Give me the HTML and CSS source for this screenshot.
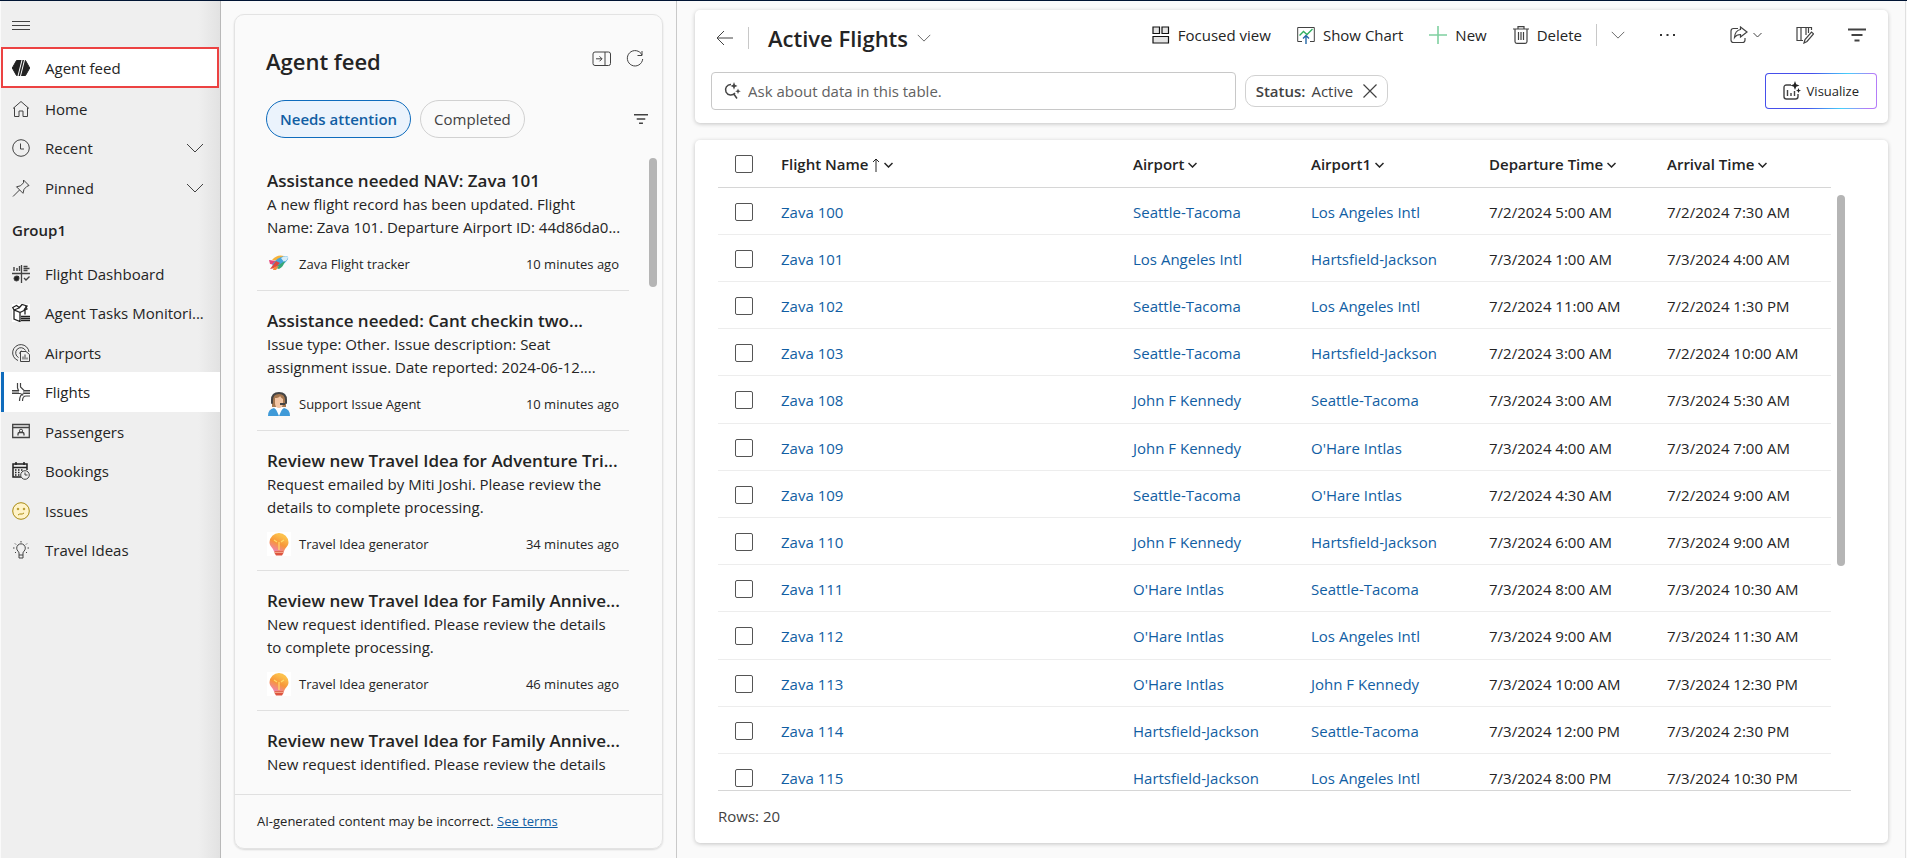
FILE: index.html
```html
<!DOCTYPE html>
<html lang="en">
    <head>
        <meta charset="utf-8">
        <title>Active Flights</title>
        <link rel="stylesheet" href="styles.css">
    </head>

    <body>
        <svg class="sprite" aria-hidden="true">
            <symbol id="chevron" viewBox="0 0 18 10"><path d="M1 1l8 8 8-8"/></symbol>
            <symbol id="filter" viewBox="0 0 18 14"><path d="M0 1.5h18M3.5 7h11M6.5 12.5h5"/></symbol>
            <symbol id="bulb" viewBox="0 0 24 24">
                <rect width="24" height="24" fill="#fff"/>
                <path d="M12 1a9.5 9.5 0 0 0-9.500 9.300c0 4.300 3.600 5.600 4.500 9.200h10c.9-3.600 4.500-4.900 4.500-9.200A9.500 9.500 0 0 0 12 1z" fill="url(#bulbFill)"/>
                <path d="M7 8l3 2M17 8l-3 2M12 10v8" stroke="#ffdc6b" stroke-width="1.2" fill="none"/>
                <path d="M7.500 19h9v2l-1.500 2.500H9L7.500 21z" fill="#dd5540"/>
                <path d="M7.500 20.300h9" stroke="#fbb79a" stroke-width="1"/>
            </symbol>
            <defs>
                <linearGradient id="bulbFill" x1="0.6" y1="0" x2="0.1" y2="1">
                    <stop offset="0.1" stop-color="#fcc04c"/>
                    <stop offset="0.5" stop-color="#f7963a"/>
                    <stop offset="1" stop-color="#ee7fc4"/>
                </linearGradient>
            </defs>
        </svg>

        <div class="app">
            <nav class="sidebar">
                <button class="menuButton" aria-label="Menu">
                    <svg width="18" height="12" viewBox="0 0 18 12"><path d="M0 1.5h18M0 5.5h18M0 9.5h18"/></svg>
                </button>
                <a href="#" class="navItem agentFeed">
                    <svg width="18" height="18" viewBox="0 0 18 18"><path d="M4.500 1.500h9L17.700 9l-4.200 7.500h-9L.3 9z" fill="#222" stroke="#222"/><path d="M10 1L6 17M12.500 1l-4 16" stroke="#fff" stroke-width="1"/></svg>
                    Agent feed
                </a>
                <ul class="navList">
                    <li><a href="#" class="navItem">
                        <svg width="18" height="18" viewBox="0 0 18 18"><path d="M1 8.500L9 1.500l8 7M2.500 7.500v9h4.500V11h4v5.500h4.500v-9"/></svg>
                        Home
                    </a></li>
                    <li><a href="#" class="navItem">
                        <svg width="18" height="18" viewBox="0 0 18 18"><circle cx="9" cy="9" r="8.300"/><path d="M8.500 4.500V10H12"/></svg>
                        Recent
                        <svg class="navChevron" width="18" height="10"><use href="#chevron"/></svg>
                    </a></li>
                    <li><a href="#" class="navItem">
                        <svg width="18" height="18" viewBox="0 0 18 18"><path d="M11.500 1l5.500 5.500-2 .8-3 3-1 4-6.500-6.500 4-1 3-3zM7.500 11L1 17.500"/></svg>
                        Pinned
                        <svg class="navChevron" width="18" height="10"><use href="#chevron"/></svg>
                    </a></li>
                </ul>
                <h2 class="navGroup">Group1</h2>
                <ul class="navList">
                    <li><a href="#" class="navItem">
                        <svg width="18" height="18" viewBox="0 0 18 18"><path d="M0 8.500h18M9.500 0v18" stroke-width="1.300"/><path d="M2 2v4M5 3v3M7.500 1v5M11.500 1.500h4M11.500 3.500h6M11.500 5.500h4M12 13l2 2 3.500-3.500" stroke-width="1.400"/><circle cx="4.500" cy="13.500" r="2.500" fill="#222"/><path d="M5.500 12.500V10.500a2.500 2.500 0 0 1 2 2z" fill="#222" stroke="none"/></svg>
                        Flight Dashboard
                    </a></li>
                    <li><a href="#" class="navItem">
                        <svg width="18" height="18" viewBox="0 0 18 18"><rect width="18" height="18" fill="#fff" stroke="none"/><path d="M2 6v9l6 2.500V8.500zM2 6l5-2M8 8.500l5-2.500M2 6L.7 3.500 4.500 1.500 8 4M7 4l3-3.500L15 2l-3 4M13 6l2-1-1.500-3M13 6v4.500M9 12.500h9M9 14.500h9M9 16.500h9" stroke="#222" stroke-width="1.300"/></svg>
                        Agent Tasks Monitori...
                    </a></li>
                    <li><a href="#" class="navItem">
                        <svg width="18" height="18" viewBox="0 0 18 18"><path d="M6 16.500A8.200 8.200 0 1 1 17 8M6.500 13.500a5.200 5.200 0 1 1 7-7M8 10a2.300 2.300 0 0 1 2-3M8.500 7.500h5.500l3.500 3v7h-9zM11 15.500v-3M13 15.500v-5M15 15.500v-2"/></svg>
                        Airports
                    </a></li>
                    <li><a href="#" class="navItem selected">
                        <svg width="18" height="18" viewBox="0 0 18 18"><path d="M0 7.500h6.500L5.500 5V0M0 10.500h8q2.500.5 3 2M8.500 0v4l3.500 3.500h6M18 10.500h-6q-4.500 1-4.500 7.500M18 13h-4q-3.500 0-3.500 5M0 9h7M11 9h7" stroke-width="1.200"/></svg>
                        Flights
                    </a></li>
                    <li><a href="#" class="navItem">
                        <svg width="18" height="18" viewBox="0 0 18 18"><path d="M.7 1.500h16.600v13H.7zM.7 4.500h16.600M6 12.500V11q0-1.500 1.500-1.500h3q1.500 0 1.500 1.500v1.500" stroke-width="1.300"/><circle cx="9" cy="7.800" r="1.600"/></svg>
                        Passengers
                    </a></li>
                    <li><a href="#" class="navItem">
                        <svg width="18" height="18" viewBox="0 0 18 18"><path d="M9 15H1V2h14v6M1 5.500h14M4 0v3M12 0v3M3 8h1.500M6 8h1.500M9 8h1.500M3 10.500h1.500M6 10.500h1.500M3 13h1.500M6 13h1.500" stroke="#222" stroke-width="1.500"/><circle cx="13" cy="13" r="4.300" fill="#efefef"/><path d="M13 10.500V13h2.500"/></svg>
                        Bookings
                    </a></li>
                    <li><a href="#" class="navItem issues">
                        <svg width="18" height="18" viewBox="0 0 18 18"><circle cx="9" cy="9" r="8.300" fill="#fff3c8"/><path d="M6 13q2-1.500 3-1t3-1"/><circle cx="6" cy="7" r=".8"/><circle cx="12" cy="7" r=".8"/></svg>
                        Issues
                    </a></li>
                    <li><a href="#" class="navItem">
                        <svg width="18" height="18" viewBox="0 0 18 18"><path d="M7 14v-2q0-1-1-1.800a4.300 4.300 0 1 1 6 0q-1 .8-1 1.800v2zM7 14v3h4v-3M9 0v1.500M3 2.500l1 1M15 2.500l-1 1M1 7h1.500M15.500 7H17M3 12l1-1M15 12l-1-1"/></svg>
                        Travel Ideas
                    </a></li>
                </ul>
            </nav>

            <aside class="feedPane">
                <section class="feedCard">
                    <header class="feedHeader">
                        <h1>Agent feed</h1>
                        <button aria-label="Expand">
                            <svg width="20" height="16" viewBox="0 0 20 16"><rect x="1" y="1" width="17.500" height="13.500" rx="2"/><path d="M13 1v13.500M4 7.800h6M7.500 5.300l2.500 2.500-2.500 2.500"/></svg>
                        </button>
                        <button aria-label="Refresh">
                            <svg width="18" height="18" viewBox="0 0 18 18"><path d="M16 5A7.700 7.700 0 1 0 16.700 9M16 1v4.500h-4.500"/></svg>
                        </button>
                    </header>
                    <div class="feedTabs">
                        <button class="pill active">Needs attention</button>
                        <button class="pill">Completed</button>
                        <button class="feedFilter" aria-label="Filter"><svg width="14" height="12"><use href="#filter"/></svg></button>
                    </div>
                    <div class="feedBody">
                        <div class="feedList">
                            <article class="feedItem">
                                <h3>Assistance needed NAV: Zava 101</h3>
                                <p>A new flight record has been updated. Flight<br>Name: Zava 101. Departure Airport ID: 44d86da0...</p>
                                <div class="feedMeta">
                                    <svg width="24" height="24" viewBox="0 0 24 24"><path d="M5 8q5-6 12-4l-6 5z" fill="#f5b23a"/><path d="M2 8l7 1-1 4-5-1z" fill="#e8467c"/><path d="M5 13q5-8 13-9 4 0 3 3-4 7-13 8z" fill="#45a5dc"/><path d="M14 6q4-3 7-1 0 3-4 5z" fill="#d8edf7"/><path d="M10 14l8-5q-1 5-6 8l-3-1z" fill="#35a877"/><path d="M9 9l4 2-5 5-5 1z" fill="#e0483e"/><path d="M7 15l5-1-3 4H6z" fill="#f58a3a"/></svg>
                                    <span>Zava Flight tracker</span>
                                    <time>10 minutes ago</time>
                                </div>
                            </article>
                            <article class="feedItem">
                                <h3>Assistance needed: Cant checkin two...</h3>
                                <p>Issue type: Other. Issue description: Seat<br>assignment issue. Date reported: 2024-06-12....</p>
                                <div class="feedMeta">
                                    <svg width="24" height="24" viewBox="0 0 24 24"><path d="M5 15V7q0-6 7-6t7 6v8z" fill="#a5774f"/><path d="M1 24q0-7 6-8l5 4 5-4q6 1 6 8z" fill="#3f9ad8"/><path d="M8 15l4 9 4-9z" fill="#fff"/><path d="M8 6q4 0 5-2 1 2 3 3v4q0 5-4 5t-4-5z" fill="#f3c6a5"/><path class="headset" d="M5 8q0-7 7-7t7 7M18 12h-5"/><rect x="4" y="7" width="2" height="5" rx="1" fill="#444"/><rect x="18" y="7" width="2" height="5" rx="1" fill="#444"/></svg>
                                    <span>Support Issue Agent</span>
                                    <time>10 minutes ago</time>
                                </div>
                            </article>
                            <article class="feedItem">
                                <h3>Review new Travel Idea for Adventure Tri...</h3>
                                <p>Request emailed by Miti Joshi. Please review the<br>details to complete processing.</p>
                                <div class="feedMeta">
                                    <svg width="24" height="24"><use href="#bulb"/></svg>
                                    <span>Travel Idea generator</span>
                                    <time>34 minutes ago</time>
                                </div>
                            </article>
                            <article class="feedItem">
                                <h3>Review new Travel Idea for Family Annive...</h3>
                                <p>New request identified. Please review the details<br>to complete processing.</p>
                                <div class="feedMeta">
                                    <svg width="24" height="24"><use href="#bulb"/></svg>
                                    <span>Travel Idea generator</span>
                                    <time>46 minutes ago</time>
                                </div>
                            </article>
                            <article class="feedItem">
                                <h3>Review new Travel Idea for Family Annive...</h3>
                                <p>New request identified. Please review the details</p>
                            </article>
                        </div>
                        <div class="feedScroll"></div>
                    </div>
                    <footer class="feedFooter">AI-generated content may be incorrect. <a href="#">See terms</a></footer>
                </section>
            </aside>

            <main class="content">
                <section class="viewHeader">
                    <div class="commandRow">
                        <button aria-label="Back"><svg width="18" height="16" viewBox="0 0 18 16"><path d="M17 8H1.500M8 1L1 8l7 7"/></svg></button>
                        <span class="divider"></span>
                        <button class="viewName"><h1>Active Flights</h1><svg width="14" height="8"><use href="#chevron"/></svg></button>
                        <div class="commandBar">
                            <div class="commands">
                                <button>
                                    <svg width="18" height="18" viewBox="0 0 18 18"><path d="M1 1h6.500v6.500H1zM10 1h6.500v6.500H10zM1 10.500h15.500V17H1z" fill="#e3e3e3" stroke="#111" stroke-width="1.200"/></svg>
                                    Focused view
                                </button>
                                <button>
                                    <svg width="18" height="18" viewBox="0 0 18 18"><path d="M5 15.500H.7V1.500h16.600v14H13"/><path d="M2.500 9.500l4-4 3.500 3L15.500 3" stroke="#2fae5f" stroke-width="1.300"/><path d="M9 18v-8M6 12.500l3-3 3 3" stroke="#2468a8" stroke-width="1.400"/></svg>
                                    Show Chart
                                </button>
                                <button>
                                    <svg width="18" height="18" viewBox="0 0 18 18"><path d="M9 0v18M0 9h18" stroke="#7fd0a0" stroke-width="1.600"/></svg>
                                    New
                                </button>
                                <button>
                                    <svg width="16" height="18" viewBox="0 0 16 18"><path d="M0 3h16M5 3V.7h6V3M2 3v12.500q0 1.800 1.800 1.800h8.400q1.800 0 1.800-1.800V3M5.500 6v8M8 6v8M10.500 6v8" stroke-width="1.200"/></svg>
                                    Delete
                                </button>
                            </div>
                            <span class="divider"></span>
                            <button aria-label="More delete options"><svg width="14" height="8"><use href="#chevron"/></svg></button>
                            <button class="overflow" aria-label="More commands"><svg width="17" height="4" viewBox="0 0 17 4"><path d="M1 1h2v2H1zM7.500 1h2v2h-2zM14 1h2v2h-2z" fill="#333" stroke="none"/></svg></button>
                            <div class="viewTools">
                                <button aria-label="Share">
                                    <svg width="18" height="18" viewBox="0 0 18 18"><path d="M8 2.500H3.500Q1 2.500 1 5v9q0 2.500 2.500 2.500h9Q15 16.500 15 14v-2M10.500 1l6.500 5-6.500 5V8.500q-4 0-6 3 .5-7 6-8z" stroke-width="1.200"/></svg>
                                    <svg class="smallChevron" width="9" height="6"><use href="#chevron"/></svg>
                                </button>
                                <button aria-label="Edit columns">
                                    <svg width="18" height="18" viewBox="0 0 18 18"><path d="M1 1.500h4v13H1zM7 14.500h-2v-13h5V9M10 1.500h2.500V7M12.500 1.500h3V4M8 17l1-3.500 6.500-7.500 2 1.800-6.500 7.700z" stroke-width="1.200"/></svg>
                                </button>
                                <button aria-label="Edit filters"><svg width="18" height="14"><use href="#filter"/></svg></button>
                            </div>
                        </div>
                    </div>
                    <div class="searchRow">
                        <label class="searchBox">
                            <svg width="18" height="18" viewBox="0 0 18 18"><path d="M8 2.500a5.300 5.300 0 1 0 4 8.500M10.500 11.500L14 16.500" stroke="#444" stroke-width="1.500"/><path d="M11 0l1 2.800L14.500 4 12 5l-1 2.800L10 5 7.500 4 10 2.800zM15 6.500l.8 2 2 .8-2 .7-.8 2-.8-2-2-.7 2-.8z" fill="#444" stroke="none"/></svg>
                            <input type="text" placeholder="Ask about data in this table." aria-label="Ask about data in this table.">
                        </label>
                        <button class="statusChip"><b>Status:</b> Active
                            <svg width="14" height="14" viewBox="0 0 14 14"><path d="M.5.5l13 13M13.500.5l-13 13" stroke-width="1.200"/></svg>
                        </button>
                        <button class="visualize">
                            <svg width="18" height="20" viewBox="0 0 18 20"><path d="M8 4H3.500Q1 4 1 6.500v9Q1 18 3.500 18h9q2.500 0 2.500-2.500V13M4.500 15V9M8 15v-3M11.500 15v-5" stroke-width="1.400"/><path d="M12 0l1.200 3.200L16.500 4.500l-3.300 1.200L12 9l-1.200-3.300L7.500 4.500l3.300-1.300zM15.500 7l.8 1.900 1.700.6-1.700.8-.8 1.700-.8-1.700-1.700-.8 1.700-.6z" fill="#222" stroke="none"/></svg>
                            Visualize
                        </button>
                    </div>
                </section>

                <section class="gridCard">
                    <div class="gridBody">
                        <table class="grid">
                            <thead>
                                <tr>
                                    <th class="checkCol"><input type="checkbox" aria-label="Select all"></th>
                                    <th>Flight Name <svg width="8" height="14" viewBox="0 0 8 14"><path d="M4 14V1M1 4l3-3 3 3"/></svg> <svg class="sort" width="9" height="6"><use href="#chevron"/></svg></th>
                                    <th class="dataCol">Airport <svg class="sort" width="9" height="6"><use href="#chevron"/></svg></th>
                                    <th class="dataCol">Airport1 <svg class="sort" width="9" height="6"><use href="#chevron"/></svg></th>
                                    <th class="dataCol">Departure Time <svg class="sort" width="9" height="6"><use href="#chevron"/></svg></th>
                                    <th class="dataCol">Arrival Time <svg class="sort" width="9" height="6"><use href="#chevron"/></svg></th>
                                </tr>
                            </thead>
                            <tbody>
                                <tr><td><input type="checkbox" aria-label="Select row"></td><td><a href="#">Zava 100</a></td><td><a href="#">Seattle-Tacoma</a></td><td><a href="#">Los Angeles Intl</a></td><td>7/2/2024 5:00 AM</td><td>7/2/2024 7:30 AM</td></tr>
                                <tr><td><input type="checkbox" aria-label="Select row"></td><td><a href="#">Zava 101</a></td><td><a href="#">Los Angeles Intl</a></td><td><a href="#">Hartsfield-Jackson</a></td><td>7/3/2024 1:00 AM</td><td>7/3/2024 4:00 AM</td></tr>
                                <tr><td><input type="checkbox" aria-label="Select row"></td><td><a href="#">Zava 102</a></td><td><a href="#">Seattle-Tacoma</a></td><td><a href="#">Los Angeles Intl</a></td><td>7/2/2024 11:00 AM</td><td>7/2/2024 1:30 PM</td></tr>
                                <tr><td><input type="checkbox" aria-label="Select row"></td><td><a href="#">Zava 103</a></td><td><a href="#">Seattle-Tacoma</a></td><td><a href="#">Hartsfield-Jackson</a></td><td>7/2/2024 3:00 AM</td><td>7/2/2024 10:00 AM</td></tr>
                                <tr><td><input type="checkbox" aria-label="Select row"></td><td><a href="#">Zava 108</a></td><td><a href="#">John F Kennedy</a></td><td><a href="#">Seattle-Tacoma</a></td><td>7/3/2024 3:00 AM</td><td>7/3/2024 5:30 AM</td></tr>
                                <tr><td><input type="checkbox" aria-label="Select row"></td><td><a href="#">Zava 109</a></td><td><a href="#">John F Kennedy</a></td><td><a href="#">O'Hare Intlas</a></td><td>7/3/2024 4:00 AM</td><td>7/3/2024 7:00 AM</td></tr>
                                <tr><td><input type="checkbox" aria-label="Select row"></td><td><a href="#">Zava 109</a></td><td><a href="#">Seattle-Tacoma</a></td><td><a href="#">O'Hare Intlas</a></td><td>7/2/2024 4:30 AM</td><td>7/2/2024 9:00 AM</td></tr>
                                <tr><td><input type="checkbox" aria-label="Select row"></td><td><a href="#">Zava 110</a></td><td><a href="#">John F Kennedy</a></td><td><a href="#">Hartsfield-Jackson</a></td><td>7/3/2024 6:00 AM</td><td>7/3/2024 9:00 AM</td></tr>
                                <tr><td><input type="checkbox" aria-label="Select row"></td><td><a href="#">Zava 111</a></td><td><a href="#">O'Hare Intlas</a></td><td><a href="#">Seattle-Tacoma</a></td><td>7/3/2024 8:00 AM</td><td>7/3/2024 10:30 AM</td></tr>
                                <tr><td><input type="checkbox" aria-label="Select row"></td><td><a href="#">Zava 112</a></td><td><a href="#">O'Hare Intlas</a></td><td><a href="#">Los Angeles Intl</a></td><td>7/3/2024 9:00 AM</td><td>7/3/2024 11:30 AM</td></tr>
                                <tr><td><input type="checkbox" aria-label="Select row"></td><td><a href="#">Zava 113</a></td><td><a href="#">O'Hare Intlas</a></td><td><a href="#">John F Kennedy</a></td><td>7/3/2024 10:00 AM</td><td>7/3/2024 12:30 PM</td></tr>
                                <tr><td><input type="checkbox" aria-label="Select row"></td><td><a href="#">Zava 114</a></td><td><a href="#">Hartsfield-Jackson</a></td><td><a href="#">Seattle-Tacoma</a></td><td>7/3/2024 12:00 PM</td><td>7/3/2024 2:30 PM</td></tr>
                                <tr><td><input type="checkbox" aria-label="Select row"></td><td><a href="#">Zava 115</a></td><td><a href="#">Hartsfield-Jackson</a></td><td><a href="#">Los Angeles Intl</a></td><td>7/3/2024 8:00 PM</td><td>7/3/2024 10:30 PM</td></tr>
                            </tbody>
                        </table>
                        <div class="gridScroll"></div>
                    </div>
                    <div class="gridFooter">Rows: 20</div>
                </section>
            </main>
        </div>
    </body>
</html>
```

FILE: styles.css
```css
* {
    box-sizing: border-box;
}
body {
    margin: 0;
    background-color: #fafafa;
    color: #242424;
    font-family: "Segoe UI", "Open Sans", sans-serif;
    font-size: 15px;
    line-height: 22px;
}
h1, h2, h3, p, ul {
    margin: 0;
    padding: 0;
    font-weight: 600;
}
p {
    font-weight: 400;
}
ul {
    list-style: none;
}
a {
    color: #115ea3;
    text-decoration: none;
}
svg {
    flex: none;
    fill: none;
    stroke: #424242;
    stroke-width: 1px;
}
button {
    display: flex;
    align-items: center;
    padding: 0;
    border: 0;
    background: none;
    color: inherit;
    font: inherit;
    white-space: nowrap;
}
.sprite {
    position: absolute;
    width: 0;
    height: 0;
}
#filter {
    stroke-width: 2px;
}
#bulb, .feedMeta svg {
    stroke: none;
}
.headset {
    stroke: #444;
    stroke-width: 2px;
}
.app {
    display: flex;
    height: 100vh;
    border-top: 1px solid #001433;
    padding-left: 1px;
    overflow: hidden;
}

/* left navigation */
.sidebar {
    flex: none;
    width: 220px;
    border-right: 1px solid #b9b9b9;
    background: linear-gradient(to right, #efefef 90%, #e2e2e2);
}
.menuButton {
    height: 46px;
    padding: 3px 11px 0;
}
.navItem {
    display: flex;
    align-items: center;
    gap: 15px;
    height: 100%;
    padding: 0 16px 0 11px;
    color: #242424;
    font-weight: 400;
    white-space: nowrap;
}
.navList li {
    height: 39px;
}
.navList li:nth-child(even) {
    height: 40px;
}
.agentFeed {
    width: 218px;
    height: 41px;
    margin-bottom: 1px;
    padding-left: 9px;
    border: 2px solid #ec4242;
    background-color: white;
}
.navChevron {
    margin-left: auto;
}
.navGroup {
    padding: 12px 11px 13px;
    font-size: 15px;
}
.selected {
    padding-left: 8px;
    border-left: 3px solid #0f6cbd;
    background-color: white;
}
.issues svg {
    stroke: #a98a10;
}

/* agent feed */
.feedPane {
    display: flex;
    flex: none;
    width: 456px;
    padding: 13px 13px 9px;
    border-right: 1px solid #c9c9c9;
}
.feedCard {
    display: flex;
    flex-direction: column;
    width: 100%;
    border: 1px solid #e3e3e3;
    border-radius: 10px;
    box-shadow: 0 1px 2px #00000022;
}
.feedHeader {
    display: flex;
    align-items: flex-start;
    gap: 14px;
    padding: 31px 18px 0 31px;
}
.feedHeader button {
    height: 26px;
}
.feedHeader h1 {
    flex: 1;
    font-size: 22px;
    line-height: 30px;
}
.feedTabs {
    display: flex;
    align-items: center;
    gap: 9px;
    padding: 24px 14px 13px 31px;
}
.pill {
    height: 38px;
    padding: 0 13px;
    border: 1px solid #d1d1d1;
    border-radius: 19px;
    color: #424242;
}
.pill.active {
    border-color: #0f6cbd;
    background-color: #ebf3fc;
    color: #115ea3;
    font-weight: 600;
}
.feedFilter {
    margin-left: auto;
}
.feedBody {
    display: flex;
    flex: 1;
    min-height: 0;
    justify-content: space-between;
    padding: 0 5px 0 22px;
}
.feedList {
    width: 372px;
    overflow: hidden;
}
.feedItem {
    height: 140px;
    padding: 18px 10px 0;
    border-bottom: 1px solid #e0e0e0;
    white-space: nowrap;
}
.feedItem h3 {
    font-size: 17px;
    line-height: 24px;
}
.feedItem p {
    line-height: 23px;
}
.feedMeta {
    display: flex;
    align-items: center;
    gap: 8px;
    padding-top: 13px;
    font-size: 13px;
}
.feedMeta time {
    margin-left: auto;
}
.feedScroll {
    width: 8px;
    height: 20%;
    margin-top: 7px;
    border-radius: 4px;
    background-color: #b5b5b5;
}
.feedFooter {
    padding: 15px 22px 16px;
    border-top: 1px solid #e0e0e0;
    font-size: 13px;
}
.feedFooter a {
    text-decoration: underline;
}

/* view header */
.content {
    display: flex;
    flex: 1;
    flex-direction: column;
    gap: 17px;
    min-width: 0;
    margin-right: 1px;
    padding: 9px 17px 15px 18px;
    border-right: 1px solid #e0e0e0;
}
.viewHeader, .gridCard {
    border-radius: 5px;
    background-color: white;
    box-shadow: 0 1px 4px #00000038;
}
.viewHeader {
    padding: 11px 11px 13px 16px;
}
.commandRow {
    display: flex;
    align-items: center;
    height: 34px;
    padding: 0 11px 0 5px;
}
.divider {
    width: 1px;
    height: 22px;
    margin: 0 14px;
    background-color: #c8c8c8;
}
.viewName {
    gap: 9px;
    padding-left: 5px;
}
.viewName h1 {
    font-size: 22px;
    line-height: 30px;
}
.commandBar {
    display: flex;
    align-items: center;
    margin-left: auto;
    padding-bottom: 6px;
}
.commands {
    display: flex;
    gap: 26px;
}
.commands button {
    gap: 8px;
}
.overflow {
    margin-left: 34px;
}
.viewTools {
    display: flex;
    align-items: center;
    gap: 34px;
    margin-left: 54px;
}
.viewTools button {
    gap: 5px;
}
.smallChevron {
    stroke-width: 2px;
}
.searchRow {
    display: flex;
    align-items: center;
    gap: 9px;
    margin-top: 17px;
}
.searchBox {
    display: flex;
    align-items: center;
    gap: 5px;
    width: 45%;
    height: 38px;
    padding: 0 11px;
    border: 1px solid #c8c8c8;
    border-radius: 4px;
}
.searchBox input {
    flex: 1;
    border: 0;
    outline: 0;
    font: inherit;
}
.searchBox input::placeholder {
    color: #616161;
}
.statusChip {
    gap: 6px;
    height: 32px;
    padding: 0 10px;
    border: 1px solid #d1d1d1;
    border-radius: 10px;
    color: #424242;
}
.statusChip b {
    font-weight: 600;
}
.statusChip svg {
    margin-left: 4px;
}
.visualize {
    gap: 6px;
    height: 36px;
    margin-left: auto;
    padding: 0 17px;
    border: 1px solid transparent;
    border-radius: 4px;
    background: linear-gradient(white, white) padding-box, linear-gradient(100deg, #464feb 40%, #47cffa 70%, #b47cf8 92%) border-box;
    font-size: 13px;
}

/* flights grid */
.gridCard {
    display: flex;
    flex: 1;
    flex-direction: column;
    min-height: 0;
    padding: 0 37px 0 23px;
}
.gridBody {
    display: flex;
    flex: 1;
    gap: 6px;
    min-height: 0;
    overflow: hidden;
    border-bottom: 1px solid #d6d6d6;
}
.grid {
    flex: 1;
    align-self: flex-start;
    border-collapse: separate;
    border-spacing: 0;
    table-layout: fixed;
}
.grid th, .grid td {
    height: 47px;
    padding: 1px 0 0 14px;
    border-bottom: 1px solid #ededed;
    text-align: left;
    white-space: nowrap;
}
.grid th {
    height: 48px;
    padding-top: 0;
    border-color: #d6d6d6;
    font-weight: 600;
}
.grid tr:nth-child(5n) td {
    height: 48px;
}
.grid .checkCol {
    width: 49px;
}
.grid .dataCol {
    width: 178px;
}
.grid input {
    display: block;
    width: 18px;
    height: 18px;
    margin: 0 0 0 3px;
    border: 1px solid #555;
    border-radius: 2px;
    appearance: none;
}
.grid th svg {
    stroke: #242424;
    vertical-align: middle;
}
.grid .sort {
    stroke-width: 3px;
}
.gridScroll {
    width: 8px;
    height: 57%;
    margin: 55px 6px 0 0;
    border-radius: 4px;
    background-color: #b5b5b5;
}
.gridFooter {
    padding: 14px 0 16px;
    color: #424242;
}
```
